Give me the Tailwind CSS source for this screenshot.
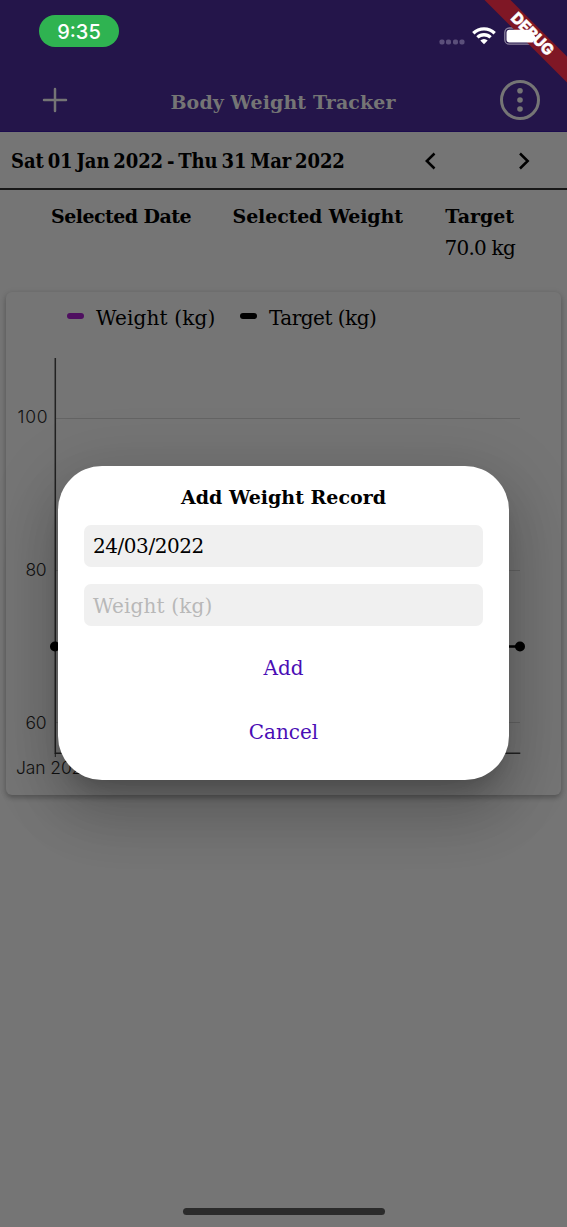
<!DOCTYPE html>
<html lang="en">
<head>
<meta charset="utf-8">
<title>Body Weight Tracker</title>
<script src="https://cdn.jsdelivr.net/npm/@tailwindcss/browser@4"></script>
</head>
<body class="w-[567px] h-[1227px] overflow-hidden bg-[#757575] text-black">
<div class="relative w-[567px] h-[1227px] overflow-hidden flex flex-col font-['DejaVu_Serif',serif] text-[20px] leading-6 whitespace-nowrap">
  <header class="h-[132px] shrink-0 bg-[#24154a] border-b border-[#1c0c4e] flex flex-col">
    <div class="h-[62px] pl-[39px] pt-[15px] flex items-start">
      <div class="w-20 h-8 rounded-full bg-[#2fb351] text-white font-['Inter',sans-serif] font-medium flex items-center justify-center"><span class="text-[20px] mt-px">9:35</span></div>
      <svg class="ml-[319px]" width="110" height="32" viewBox="438 15 110 32">
        <g fill="#5b4f7a"><rect x="439.500" y="39.500" width="5" height="5" rx="1.800"/><rect x="446" y="39.500" width="5" height="5" rx="1.800"/><rect x="453" y="39.500" width="5" height="5" rx="1.800"/><rect x="459.500" y="39.500" width="5" height="5" rx="1.800"/></g>
        <g fill="none" stroke="#fff" stroke-width="3.300"><path d="M473.300 33.200a15.400 15.400 0 0 1 21.400 0"/><path d="M477.400 37.400a9.500 9.500 0 0 1 13.200 0"/></g>
        <path d="M484 44.300l-3.700-3.900a5.300 5.300 0 0 1 7.400 0z" fill="#fff"/>
        <rect x="504.800" y="28" width="32" height="16.200" rx="4.500" fill="none" stroke="#8d839f" stroke-width="1.300"/>
      </svg>
    </div>
    <div class="h-[69px] flex items-center justify-between pl-[42px] pr-[27px] text-[#757575]">
      <svg class="mt-1.5" width="26" height="26" viewBox="0 0 26 26" fill="none" stroke="currentColor" stroke-width="2.500" stroke-linecap="round"><path d="M13 2v22M2 13h22"/></svg>
      <h1 class="mt-2.5 font-bold text-[19px] tracking-[0.100px] -ml-0.5">Body Weight Tracker</h1>
      <svg class="mt-1.5" width="40" height="40" viewBox="0 0 40 40" fill="currentColor"><circle cx="20" cy="20" r="18.500" fill="none" stroke="currentColor" stroke-width="3"/><circle cx="20" cy="10.800" r="2.800"/><circle cx="20" cy="20" r="2.800"/><circle cx="20" cy="29" r="2.800"/></svg>
    </div>
  </header>
  <section class="h-[58px] shrink-0 flex items-center pl-[11px] pr-[37.500px] border-b-2 border-[#181818] font-bold font-['DejaVu_Serif_Condensed','DejaVu_Serif',serif] [font-stretch:condensed]">
    <span class="tracking-[-0.100px] [word-spacing:-2.200px] mt-0.5">Sat 01 Jan 2022 - Thu 31 Mar 2022</span>
    <div class="ml-auto flex gap-[81px] mt-0.5">
      <svg width="12" height="18" viewBox="0 0 12 18" fill="none" stroke="#000" stroke-width="2.500"><path d="M9.500 1.500L1.800 9l7.700 7.500"/></svg>
      <svg width="12" height="18" viewBox="0 0 12 18" fill="none" stroke="#000" stroke-width="2.500"><path d="M2 1.500L9.700 9 2 16.500"/></svg>
    </div>
  </section>
  <section class="h-[102px] shrink-0 flex justify-between items-start pt-3.5 pl-[51px] pr-[52px] font-bold text-[19px]">
    <span class="tracking-[-0.550px]">Selected Date</span>
    <span class="tracking-[-0.150px]">Selected Weight</span>
    <div class="flex flex-col items-center gap-2"><span>Target</span><span class="text-[20px] font-normal tracking-[-0.750px]">70.0 kg</span></div>
  </section>
  <section class="mx-1.5 h-[503px] shrink-0 rounded-md bg-[#757575] shadow-[0_3px_5px_rgba(0,0,0,0.2),0_1px_6px_rgba(0,0,0,0.12)] flex flex-col">
    <div class="h-[66px] pl-[61px] pt-[13px] flex items-start">
      <i class="w-[17px] h-1.5 mt-2 rounded-full bg-[#4f0f60]"></i>
      <span class="ml-3 mt-px w-[120px] tracking-[0.150px]">Weight (kg)</span>
      <i class="w-[17px] h-1.5 mt-2 ml-6 rounded-full bg-black"></i>
      <span class="ml-3 mt-px tracking-[-0.500px]">Target (kg)</span>
    </div>
    <svg width="555" height="437" viewBox="6 358 555 437">
      <g stroke="#646464" stroke-width="1"><path d="M56 418.500h464M56 570.500h464M56 722.500h464"/></g>
      <g stroke="#222" stroke-width="1.500" fill="none"><path d="M55.300 358v395.200h465"/><path d="M55.300 753v4" stroke-width="1"/></g>
      <path d="M55 646.500h465" stroke="#000" stroke-width="2.500"/><circle cx="55" cy="646.500" r="5"/><circle cx="520" cy="646.500" r="5"/>
      <g fill="#111" font-family="Inter, sans-serif" font-size="17.500" font-weight="300" text-anchor="end"><text x="47.500" y="423" textLength="30">100</text><text x="46.500" y="575.500" textLength="21">80</text><text x="46.500" y="728.500" textLength="21">60</text><text x="16" y="773.500" text-anchor="start" textLength="77">Jan 2022</text></g>
    </svg>
  </section>
  <div role="dialog" class="absolute left-[58px] top-[466px] w-[451px] h-[314px] rounded-[44px] bg-white px-[26px] pt-[19px] flex flex-col shadow-[0_16px_22px_-10px_rgba(0,0,0,0.2),0_35px_55px_4px_rgba(0,0,0,0.14),0_13px_67px_12px_rgba(0,0,0,0.12)]">
    <h2 class="text-center font-bold text-[19px]">Add Weight Record</h2>
    <div class="mt-4 h-[42px] rounded-[7px] bg-[#f0f0f0] px-[9px] flex items-center tracking-[-0.450px]">24/03/2022</div>
    <div class="mt-[17px] h-[42px] rounded-[7px] bg-[#f0f0f0] px-[9px] flex items-center text-[#b8b8b8] tracking-[0.150px]"><span class="mt-0.5">Weight (kg)</span></div>
    <button class="mt-[30px] h-6 text-[#4a0db5]">Add</button>
    <button class="mt-10 h-6 text-[#4a0db5]">Cancel</button>
  </div>
  <svg class="absolute right-0 top-0" width="90" height="90" viewBox="477 0 90 90"><path d="M484.500 0h26L567 56.500v26z" fill="#7f1725"/><path d="M509.500 29.700H529l7 8-3.500 4.800h-23a3 3 0 0 1-3-3v-6.800a3 3 0 0 1 3-3z" fill="#fff"/><text transform="translate(528.700 37.800) rotate(45)" text-anchor="middle" font-family="Inter, sans-serif" font-weight="800" font-size="15.500" fill="#fff" stroke="#fff" stroke-width="0.500" textLength="53" lengthAdjust="spacingAndGlyphs">DEBUG</text></svg>
  <div class="absolute bottom-3 left-[183px] w-[202px] h-[7px] rounded-full bg-[#2b2b2b]"></div>
</div>
</body>
</html>
